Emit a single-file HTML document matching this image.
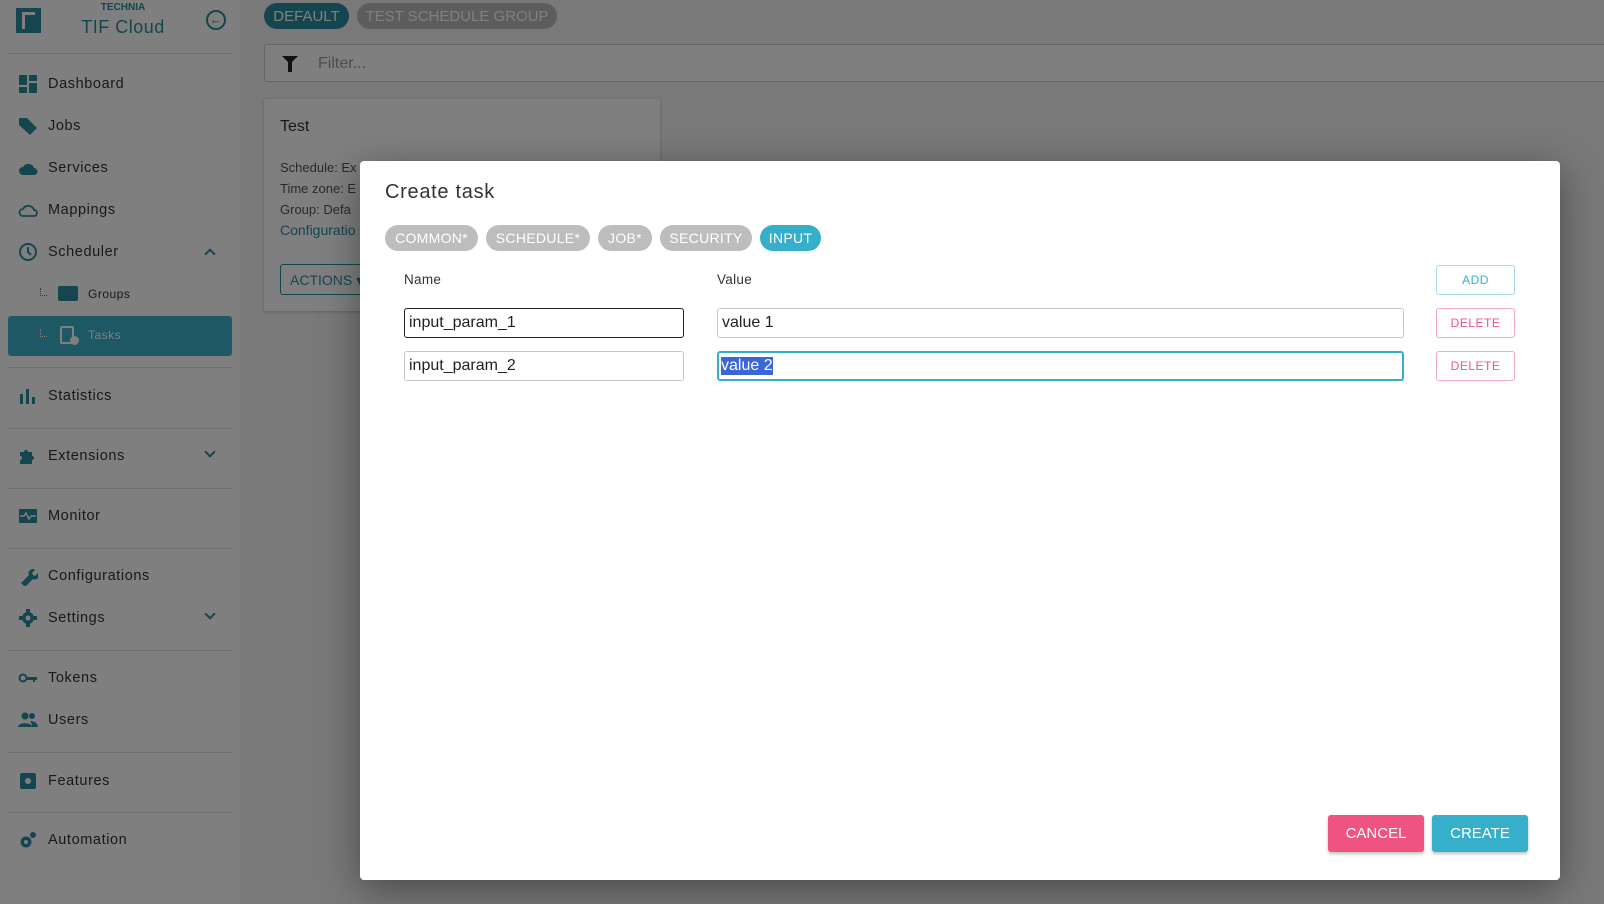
<!DOCTYPE html>
<html><head><meta charset="utf-8"><style>
*{box-sizing:border-box;margin:0;padding:0}
body{width:1604px;height:904px;overflow:hidden;background:#f2f2f2;font-family:"Liberation Sans",sans-serif;position:relative}
.abs{position:absolute}
.side{left:0;top:0;width:240px;height:904px;background:#fff}
.item{position:absolute;left:18px;font-size:14.5px;color:#333;height:20px;display:flex;align-items:center;letter-spacing:.6px}
.item svg{width:20px;height:20px;fill:#2a8c9e;margin-right:10px}
.item span{position:absolute;left:30px;white-space:nowrap}
.div{position:absolute;left:8px;width:224px;height:1px;background:#ddd}
.chev{position:absolute;left:206px;width:8px;height:8px;border-right:2px solid #2a8c9e;border-bottom:2px solid #2a8c9e}
.overlay{left:0;top:0;width:1604px;height:904px;background:rgba(0,0,0,0.5)}
.modal{left:360px;top:161px;width:1200px;height:719px;background:#fff;border-radius:4px;box-shadow:0 10px 40px rgba(0,0,0,.4)}
.chip{position:absolute;top:64px;height:26px;border-radius:13px;color:#fff;font-size:14px;display:flex;align-items:center;justify-content:center;letter-spacing:.3px}
.inp{position:absolute;height:30px;border:1px solid #c8c8c8;border-radius:3px;font-size:16px;color:#222;padding-left:4px;display:flex;align-items:center}
.ob{position:absolute;left:1076px;width:79px;height:30px;border-radius:3px;font-size:12px;display:flex;align-items:center;justify-content:center;letter-spacing:.5px}
.btn{position:absolute;top:654px;width:96px;height:37px;border-radius:3px;color:#fff;font-size:15px;display:flex;align-items:center;justify-content:center;box-shadow:0 2px 3px rgba(0,0,0,.25)}
.dots{position:absolute;left:40px;width:7px;height:8px;border-left:1px dotted #2a8c9e;border-bottom:1px dotted #2a8c9e}
</style></head><body>
<div class="abs side">
  <div class="abs" style="left:16px;top:8px;width:25px;height:25px;background:#2a8c9e"></div>
  <div class="abs" style="left:22px;top:12px;width:13px;height:17px;border:3px solid #fff;border-right:none;border-bottom:none"></div>
  <div class="abs" style="left:83px;top:2px;width:80px;text-align:center;font-size:10px;font-weight:bold;color:#2a8c9e">TECHNIA</div>
  <div class="abs" style="left:73px;top:17px;width:100px;text-align:center;font-size:18px;color:#2a8c9e;letter-spacing:.5px">TIF Cloud</div>
  <div class="abs" style="left:206px;top:10px;width:20px;height:20px;border:2px solid #2a8c9e;border-radius:50%;color:#2a8c9e;font-size:13px;line-height:16px;text-align:center;font-weight:bold">←</div>
  <div class="div" style="top:53px"></div>
  <div class="item" style="top:74px"><svg viewBox="0 0 20 20"><rect x="1" y="1" width="8" height="10"/><rect x="11" y="1" width="8" height="6"/><rect x="1" y="13" width="8" height="6"/><rect x="11" y="9" width="8" height="10"/></svg><span>Dashboard</span></div>
  <div class="item" style="top:116px"><svg viewBox="0 0 20 20"><path d="M1 2h8l10 10-7 7L1 9z"/></svg><span>Jobs</span></div>
  <div class="item" style="top:158px"><svg viewBox="0 0 20 20"><path d="M5 17a4 4 0 0 1 0-8 6 6 0 0 1 11 1 3.5 3.5 0 0 1 0 7z"/></svg><span>Services</span></div>
  <div class="item" style="top:200px"><svg viewBox="0 0 20 20"><path d="M5 16a3.5 3.5 0 0 1 0-7 6 6 0 0 1 11 1 3 3 0 0 1 0 6z" fill="none" stroke="#2a8c9e" stroke-width="1.8"/></svg><span>Mappings</span></div>
  <div class="item" style="top:242px"><svg viewBox="0 0 20 20"><circle cx="10" cy="10" r="8" fill="none" stroke="#2a8c9e" stroke-width="2"/><path d="M10 5v5l3 3" fill="none" stroke="#2a8c9e" stroke-width="2"/></svg><span>Scheduler</span></div>
  <div class="chev" style="top:250px;transform:rotate(-135deg)"></div>
  <div class="dots" style="top:288px"></div>
  <div class="abs" style="left:58px;top:286px;width:20px;height:15px;background:#2a8c9e;border-radius:2px"></div>
  <div class="abs" style="left:88px;top:287px;font-size:12px;color:#333;letter-spacing:.5px">Groups</div>
  <div class="abs" style="left:8px;top:316px;width:224px;height:40px;background:#3bb0c9;border-radius:3px"></div>
  <div class="dots" style="top:329px;border-color:#fff"></div>
  <div class="abs" style="left:60px;top:326px;width:14px;height:18px;border:2px solid #fff;border-radius:2px"></div>
  <div class="abs" style="left:70px;top:336px;width:9px;height:9px;background:#fff;border-radius:50%"></div>
  <div class="abs" style="left:88px;top:328px;font-size:12px;color:#fff;letter-spacing:.5px">Tasks</div>
  <div class="div" style="top:367px"></div>
  <div class="item" style="top:386px"><svg viewBox="0 0 20 20"><rect x="2" y="8" width="3" height="10"/><rect x="8" y="3" width="3" height="15"/><rect x="14" y="11" width="3" height="7"/></svg><span>Statistics</span></div>
  <div class="div" style="top:428px"></div>
  <div class="item" style="top:446px"><svg viewBox="0 0 20 20"><path d="M2 6h4a2 2 0 1 1 4 0h4v4a2 2 0 1 1 0 4v4H2v-4a2 2 0 1 0 0-4z"/></svg><span>Extensions</span></div>
  <div class="chev" style="top:448px;transform:rotate(45deg)"></div>
  <div class="div" style="top:488px"></div>
  <div class="item" style="top:506px"><svg viewBox="0 0 20 20"><rect x="1" y="3" width="18" height="14" rx="1"/><path d="M2 10h4l2-3 3 6 2-3h5" fill="none" stroke="#fff" stroke-width="1.5"/></svg><span>Monitor</span></div>
  <div class="div" style="top:548px"></div>
  <div class="item" style="top:566px"><svg viewBox="0 0 20 20"><path d="M3 17l8-8a4 4 0 0 1 6-5l-3 3 1 2 2 1 3-3a4 4 0 0 1-5 6l-8 8z"/></svg><span>Configurations</span></div>
  <div class="item" style="top:608px"><svg viewBox="0 0 20 20"><circle cx="10" cy="10" r="6"/><circle cx="10" cy="10" r="2.5" fill="#fff"/><path d="M8 1h4v4H8zM8 15h4v4H8zM1 8h4v4H1zM15 8h4v4h-4z"/></svg><span>Settings</span></div>
  <div class="chev" style="top:610px;transform:rotate(45deg)"></div>
  <div class="div" style="top:650px"></div>
  <div class="item" style="top:668px"><svg viewBox="0 0 20 20"><circle cx="5" cy="10" r="3.5" fill="none" stroke="#2a8c9e" stroke-width="2"/><path d="M8 9h11v3h-2v2h-2v-2H8z"/></svg><span>Tokens</span></div>
  <div class="item" style="top:710px"><svg viewBox="0 0 20 20"><circle cx="7" cy="6" r="3.5"/><circle cx="14" cy="6" r="3"/><path d="M0 17c0-5 14-5 14 0zM14 17c0-3-1-5-2-6 4 0 8 2 8 6z"/></svg><span>Users</span></div>
  <div class="div" style="top:752px"></div>
  <div class="item" style="top:771px"><svg viewBox="0 0 20 20"><rect x="2" y="2" width="16" height="16" rx="2"/><circle cx="10" cy="10" r="3" fill="#fff"/></svg><span>Features</span></div>
  <div class="div" style="top:812px"></div>
  <div class="item" style="top:830px"><svg viewBox="0 0 20 20"><circle cx="8" cy="12" r="5.5"/><circle cx="8" cy="12" r="2" fill="#fff"/><circle cx="15" cy="5" r="3"/></svg><span>Automation</span></div>
</div>
<div class="abs" style="left:264px;top:3px;width:85px;height:26px;border-radius:13px;background:#2a8c9e;color:#fff;font-size:15px;display:flex;align-items:center;justify-content:center">DEFAULT</div>
<div class="abs" style="left:357px;top:3px;width:200px;height:26px;border-radius:13px;background:#bbb;color:#fff;font-size:15px;display:flex;align-items:center;justify-content:center">TEST SCHEDULE GROUP</div>
<div class="abs" style="left:264px;top:44px;width:1350px;height:38px;border:1px solid #ccc;border-radius:3px;background:#fff"></div>
<div class="abs" style="left:282px;top:56px;width:0;height:0;border-left:8px solid transparent;border-right:8px solid transparent;border-top:8px solid #222"></div>
<div class="abs" style="left:288px;top:62px;width:4px;height:10px;background:#222"></div>
<div class="abs" style="left:318px;top:55px;font-size:16px;color:#999">Filter...</div>
<div class="abs" style="left:264px;top:99px;width:396px;height:212px;background:#fff;border-radius:3px;box-shadow:0 1px 3px rgba(0,0,0,.2)"></div>
<div class="abs" style="left:280px;top:118px;font-size:16px;color:#333">Test</div>
<div class="abs" style="left:280px;top:157px;font-size:13px;color:#555;line-height:21px">Schedule: Ex<br>Time zone: E<br>Group: Defa<br><span style="color:#2a8c9e;font-size:14px">Configuratio</span></div>
<div class="abs" style="left:280px;top:264px;width:100px;height:31px;border:1px solid #2a8c9e;border-radius:3px;color:#2a8c9e;font-size:14px;padding:7px 9px">ACTIONS ▾</div>
<div class="abs overlay"></div>
<div class="abs modal">
  <div class="abs" style="left:25px;top:20px;font-size:20px;color:#333;letter-spacing:.7px">Create task</div>
  <div class="chip" style="left:25px;width:93px;background:#bdbdbd">COMMON*</div>
  <div class="chip" style="left:126px;width:104px;background:#bdbdbd">SCHEDULE*</div>
  <div class="chip" style="left:238px;width:54px;background:#bdbdbd">JOB*</div>
  <div class="chip" style="left:300px;width:92px;background:#bdbdbd">SECURITY</div>
  <div class="chip" style="left:400px;width:61px;background:#36afca">INPUT</div>
  <div class="abs" style="left:44px;top:111px;font-size:13.5px;color:#333;letter-spacing:.3px">Name</div>
  <div class="abs" style="left:357px;top:111px;font-size:13.5px;color:#333;letter-spacing:.3px">Value</div>
  <div class="ob" style="top:104px;border:1px solid #a7dbe6;color:#36afca">ADD</div>
  <div class="inp" style="left:44px;top:147px;width:280px;border:1.5px solid #222">input_param_1</div>
  <div class="inp" style="left:357px;top:147px;width:687px">value 1</div>
  <div class="ob" style="top:147px;border:1px solid #f5a9bf;color:#ee5480">DELETE</div>
  <div class="inp" style="left:44px;top:190px;width:280px">input_param_2</div>
  <div class="inp" style="left:357px;top:190px;width:687px;border:2px solid #36afca;padding-left:2px"><span style="background:#3a66d6;color:#fff">value 2</span></div>
  <div class="ob" style="top:190px;border:1px solid #f5a9bf;color:#ee5480">DELETE</div>
  <div class="btn" style="left:968px;background:#ef5380">CANCEL</div>
  <div class="btn" style="left:1072px;background:#36afca">CREATE</div>
</div>
</body></html>
